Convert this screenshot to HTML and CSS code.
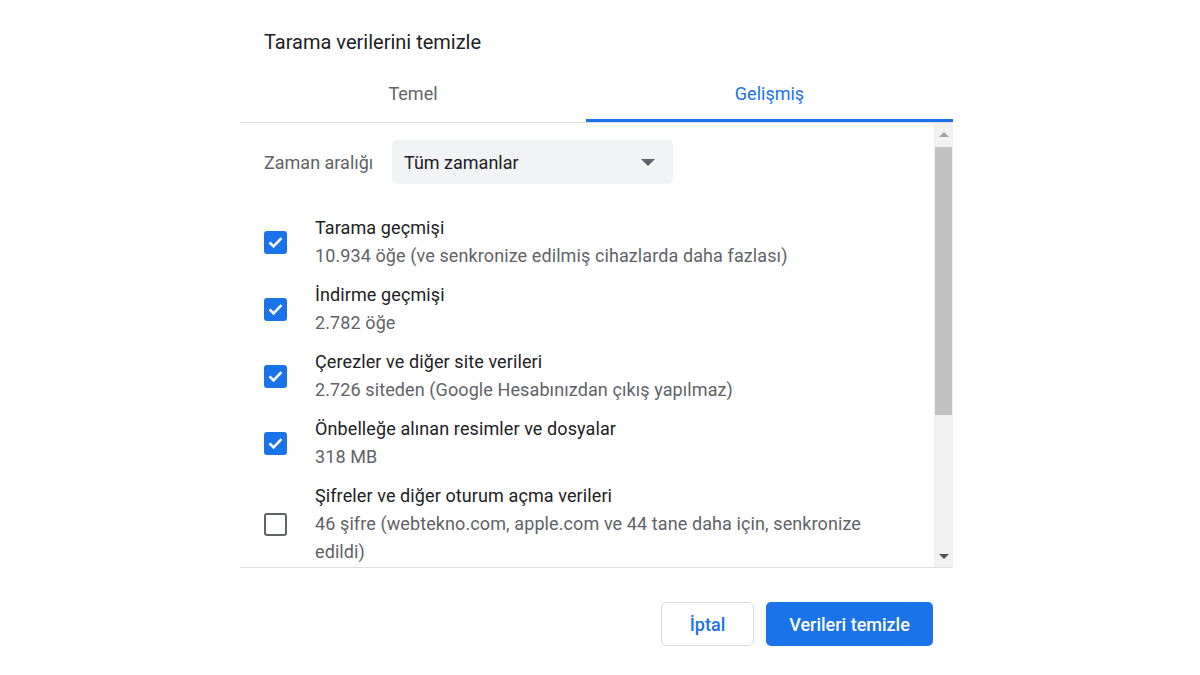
FILE: index.html
```html
<!DOCTYPE html>
<html lang="tr">

<head>
    <meta charset="UTF-8">
    <title>Tarama verilerini temizle</title>
    <link rel="stylesheet" href="styles.css">
</head>

<body>
    <div class="dialog">
        <div class="title">Tarama verilerini temizle</div>

        <div class="tabs">
            <div class="tab">Temel</div>
            <div class="tab active">Gelişmiş</div>
        </div>

        <div class="content">
            <div class="list">
                <div class="range-row">
                    <span class="range-label">Zaman aralığı</span>
                    <div class="select">
                        <span>Tüm zamanlar</span>
                        <span class="caret"></span>
                    </div>
                </div>

                <div class="item">
                    <span class="box checked">
                        <svg viewBox="0 0 24 24" width="20" height="20"><path d="M4.5 12.5l5 5L19.5 7" fill="none" stroke="#fff" stroke-width="3.2"/></svg>
                    </span>
                    <div class="text">
                        <div class="label">Tarama geçmişi</div>
                        <div class="sub">10.934 öğe (ve senkronize edilmiş cihazlarda daha fazlası)</div>
                    </div>
                </div>

                <div class="item">
                    <span class="box checked">
                        <svg viewBox="0 0 24 24" width="20" height="20"><path d="M4.5 12.5l5 5L19.5 7" fill="none" stroke="#fff" stroke-width="3.2"/></svg>
                    </span>
                    <div class="text">
                        <div class="label">İndirme geçmişi</div>
                        <div class="sub">2.782 öğe</div>
                    </div>
                </div>

                <div class="item">
                    <span class="box checked">
                        <svg viewBox="0 0 24 24" width="20" height="20"><path d="M4.5 12.5l5 5L19.5 7" fill="none" stroke="#fff" stroke-width="3.2"/></svg>
                    </span>
                    <div class="text">
                        <div class="label">Çerezler ve diğer site verileri</div>
                        <div class="sub">2.726 siteden (Google Hesabınızdan çıkış yapılmaz)</div>
                    </div>
                </div>

                <div class="item">
                    <span class="box checked">
                        <svg viewBox="0 0 24 24" width="20" height="20"><path d="M4.5 12.5l5 5L19.5 7" fill="none" stroke="#fff" stroke-width="3.2"/></svg>
                    </span>
                    <div class="text">
                        <div class="label">Önbelleğe alınan resimler ve dosyalar</div>
                        <div class="sub">318 MB</div>
                    </div>
                </div>

                <div class="item">
                    <span class="box"></span>
                    <div class="text">
                        <div class="label">Şifreler ve diğer oturum açma verileri</div>
                        <div class="sub">46 şifre (webtekno.com, apple.com ve 44 tane daha için, senkronize edildi)</div>
                    </div>
                </div>
            </div>

            <div class="scrollbar">
                <span class="arrow up"></span>
                <div class="track">
                    <div class="thumb"></div>
                </div>
                <span class="arrow down"></span>
            </div>
        </div>

        <div class="actions">
            <button class="btn cancel">İptal</button>
            <button class="btn primary">Verileri temizle</button>
        </div>
    </div>
</body>

</html>
```

FILE: styles.css
```css
body {
    margin: 0;
    background-color: #fff;
    font-family: Roboto, "Liberation Sans", Arial, sans-serif;
    color: #202124;
}

.dialog {
    width: 713px;
    margin-left: 240px;
}

.title {
    padding: 30px 24px 0;
    font-size: 20px;
    line-height: 24px;
    color: #202124;
}

.tabs {
    display: flex;
    margin-top: 10px;
    border-bottom: 1px solid #e0e0e0;
}

.tab {
    flex: 1;
    text-align: center;
    font-size: 18px;
    color: #5f6368;
    padding-top: 5px;
    line-height: 50px;
    border-bottom: 3px solid transparent;
}

.tab:first-child {
    flex: 0 0 346px;
}

.tab.active {
    color: #1a73e8;
    border-bottom-color: #1a73e8;
}

.content {
    display: flex;
    height: 444px;
    border-bottom: 1px solid #e0e0e0;
    overflow: hidden;
}

.list {
    flex: 1;
    padding-left: 24px;
}

.range-row {
    display: flex;
    align-items: center;
    margin-top: 17px;
    margin-bottom: 30px;
}

.range-label {
    font-size: 18px;
    color: #5f6368;
    width: 128px;
}

.select {
    display: flex;
    align-items: center;
    justify-content: space-between;
    width: 281px;
    height: 44px;
    box-sizing: border-box;
    padding: 0 12px;
    background-color: #f1f3f4;
    border-radius: 5px;
    font-size: 18px;
    color: #202124;
}

.caret {
    width: 0;
    height: 0;
    margin-right: 6px;
    border-left: 7px solid transparent;
    border-right: 7px solid transparent;
    border-top: 7px solid #5f6368;
}

.item {
    display: flex;
    align-items: center;
    margin-bottom: 11px;
}

.box {
    display: flex;
    align-items: center;
    justify-content: center;
    width: 23px;
    height: 23px;
    box-sizing: border-box;
    border: 2px solid #5f6368;
    border-radius: 3px;
    margin-right: 28px;
    flex-shrink: 0;
}

.box.checked {
    background-color: #1a73e8;
    border-color: #1a73e8;
}

.text {
    width: 570px;
    font-size: 18px;
    line-height: 28px;
    letter-spacing: 0.1px;
}

.label {
    color: #202124;
}

.sub {
    color: #5f6368;
}

.scrollbar {
    width: 19px;
    display: flex;
    flex-direction: column;
    background-color: #f1f1f1;
}

.arrow {
    height: 22px;
    display: flex;
    align-items: center;
    justify-content: center;
}

.arrow::after {
    content: "";
    border-left: 5px solid transparent;
    border-right: 5px solid transparent;
}

.arrow.up::after {
    border-bottom: 5px solid #a3a3a3;
}

.arrow.down::after {
    border-top: 5px solid #505050;
}

.track {
    flex: 1;
    padding: 2px 1px;
}

.thumb {
    height: 268px;
    background-color: #c1c1c1;
}

.actions {
    display: flex;
    justify-content: flex-end;
    gap: 12px;
    padding: 34px 20px 0 0;
}

.btn {
    height: 44px;
    padding: 0 22px;
    font-family: Roboto, "Liberation Sans", Arial, sans-serif;
    font-size: 18px;
    font-weight: 500;
    border-radius: 5px;
    cursor: pointer;
}

.cancel {
    width: 93px;
    background-color: #fff;
    color: #1a73e8;
    border: 1px solid #dadce0;
}

.primary {
    width: 167px;
    background-color: #1a73e8;
    color: #fff;
    border: none;
}
```
